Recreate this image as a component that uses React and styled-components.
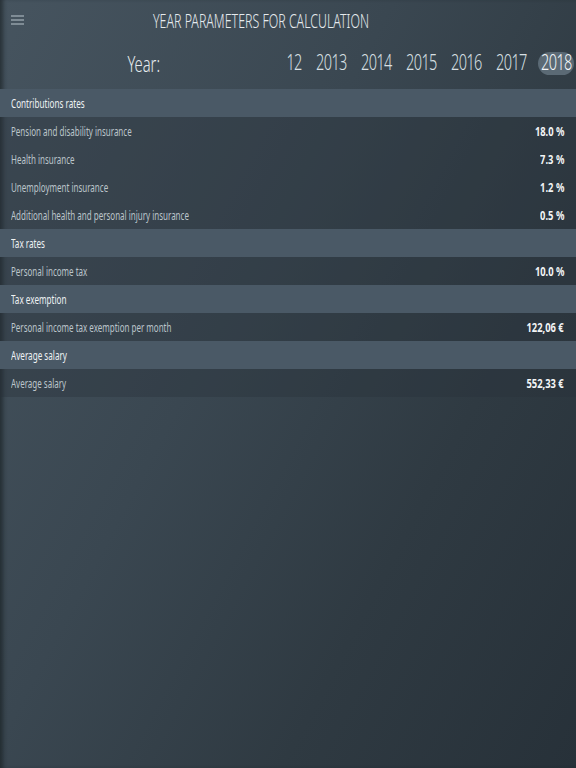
import styled, { createGlobalStyle } from "styled-components";

const GlobalStyle = createGlobalStyle`
  html, body {
    margin: 0;
    padding: 0;
    background: #323e47;
  }
`;

// no condensed face is installed, so text is narrowed with scaleX
const font = `"Noto Sans", "DejaVu Sans", sans-serif`;

const Page = styled.div`
  width: 576px;
  height: 768px;
  overflow: hidden;
  font-family: ${font};
  background: linear-gradient(118deg, #46545f 0%, #3a4751 40%, #2f3a42 70%, #273139 100%);
  box-shadow: inset 5px 0 4px -2px rgba(20, 26, 30, 0.6);
`;

const TopBar = styled.div`
  height: 40px;
  display: grid;
  grid-template-columns: 40px 1fr 94px;
  align-items: center;
`;

const MenuButton = styled.div`
  padding-left: 11px;
  display: flex;
  align-items: center;
`;

const Title = styled.h1`
  margin: 0;
  text-align: center;
  font-size: 20px;
  font-weight: 300;
  color: #e6ebee;
  white-space: nowrap;
  transform: scaleX(0.62);
`;

const YearBar = styled.div`
  height: 47px;
  padding-bottom: 2px;
  display: flex;
  align-items: center;
`;

const YearLabel = styled.div`
  width: 160px;
  flex: none;
  text-align: right;
  font-size: 22px;
  font-weight: 300;
  color: #e6ebee;
  transform: translateY(-1px) scaleX(0.67);
  transform-origin: right center;
`;

const Years = styled.div`
  margin-left: auto;
  display: flex;
  align-items: center;
`;

const YearItem = styled.div`
  flex: none;
  position: relative;
  width: ${(p) => (p.$partial ? "19px" : "45px")};
  height: 23px;
  display: flex;
  justify-content: ${(p) => (p.$partial ? "flex-end" : "center")};
  align-items: center;
  overflow: ${(p) => (p.$partial ? "hidden" : "visible")};
  color: ${(p) => (p.$active ? "#f2f5f7" : "#d9e0e4")};

  &::before {
    content: "";
    position: absolute;
    top: 0;
    left: 7px;
    width: 36px;
    height: 23px;
    border-radius: 12px;
    background: ${(p) => (p.$active ? "#5b6a75" : "transparent")};
  }
`;

const YearText = styled.span`
  flex: none;
  position: relative;
  font-size: 21px;
  font-weight: 300;
  line-height: 1;
  letter-spacing: -0.8px;
  transform: translate(3px, -1px) scaleX(0.69);
`;

const SectionHead = styled.div`
  height: 28px;
  display: flex;
  align-items: center;
  padding: 0 11px;
  background: #4a5966;
`;

const HeadText = styled.span`
  display: inline-block;
  white-space: nowrap;
  color: #eef2f4;
  font-size: 12.5px;
  transform: scaleX(0.65);
  transform-origin: left center;
`;

const Row = styled.div`
  height: 28px;
  display: flex;
  align-items: center;
  justify-content: space-between;
  padding: 0 12px 0 11px;
  background: rgba(40, 50, 58, 0.35);
`;

const Label = styled.span`
  display: inline-block;
  white-space: nowrap;
  font-size: 12.5px;
  font-weight: 400;
  color: #bcc5cb;
  transform: scaleX(0.64);
  transform-origin: left center;
`;

const Value = styled.span`
  display: inline-block;
  white-space: nowrap;
  font-size: 12.5px;
  font-weight: 700;
  color: #f3f5f6;
  transform: scaleX(0.75);
  transform-origin: right center;
`;

const sections = [
  {
    title: "Contributions rates",
    rows: [
      ["Pension and disability insurance", "18.0 %"],
      ["Health insurance", "7.3 %"],
      ["Unemployment insurance", "1.2 %"],
      ["Additional health and personal injury insurance", "0.5 %"],
    ],
  },
  { title: "Tax rates", rows: [["Personal income tax", "10.0 %"]] },
  {
    title: "Tax exemption",
    rows: [["Personal income tax exemption per month", "122,06 €"]],
  },
  { title: "Average salary", rows: [["Average salary", "552,33 €"]] },
];

const years = ["2012", "2013", "2014", "2015", "2016", "2017", "2018"];

function MenuIcon() {
  return (
    <svg width="13" height="10" viewBox="0 0 13 10">
      <g stroke="#8e9ba4" strokeWidth="1.6">
        <line x1="0" y1="1" x2="13" y2="1" />
        <line x1="0" y1="5" x2="13" y2="5" />
        <line x1="0" y1="9" x2="13" y2="9" />
      </g>
    </svg>
  );
}

export default function App() {
  return (
    <>
      <GlobalStyle />
      <Page>
        <TopBar>
          <MenuButton>
            <MenuIcon />
          </MenuButton>
          <Title>YEAR PARAMETERS FOR CALCULATION</Title>
        </TopBar>
        <YearBar>
          <YearLabel>Year:</YearLabel>
          <Years>
            {years.map((y, i) => (
              <YearItem key={y} $partial={i === 0} $active={y === "2018"}>
                <YearText>{y}</YearText>
              </YearItem>
            ))}
          </Years>
        </YearBar>
        {sections.map((s) => (
          <div key={s.title}>
            <SectionHead>
              <HeadText>{s.title}</HeadText>
            </SectionHead>
            {s.rows.map(([l, v]) => (
              <Row key={l}>
                <Label>{l}</Label>
                <Value>{v}</Value>
              </Row>
            ))}
          </div>
        ))}
      </Page>
    </>
  );
}
